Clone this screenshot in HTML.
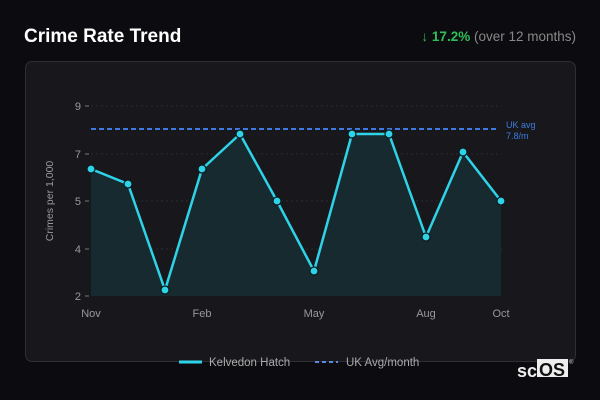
<!DOCTYPE html>
<html><head><style>
body{margin:0;width:600px;height:400px;background:#0c0c10;font-family:"Liberation Sans",sans-serif;overflow:hidden;position:relative}
.t{position:absolute;left:24px;top:26px;color:#fff;font-weight:bold;font-size:19px}
.r{position:absolute;right:24px;top:29px;font-size:13.5px;color:#888}
.r b{color:#2fbf5a}
.card{position:absolute;left:25px;top:61px;width:549px;height:299px;background:#18181c;border:1px solid #2e2e33;border-radius:7px}
</style></head><body>
<div class="t">Crime Rate Trend</div>
<div class="r"><b>↓ 17.2%</b> (over 12 months)</div>
<div class="card"></div>
<svg width="600" height="400" style="position:absolute;left:0;top:0" font-family="Liberation Sans, sans-serif">
<g stroke="#2a2a30" stroke-dasharray="2,3">
<line x1="91" y1="106" x2="502" y2="106"/><line x1="91" y1="154" x2="502" y2="154"/><line x1="91" y1="201" x2="502" y2="201"/><line x1="91" y1="249" x2="502" y2="249"/>
</g>
<polygon fill="#172a30" points="91,296 91,169 128,184 165,290 202,169 240,134 277,201 314,271 352,134 389,134 426,237 463,152 501,201 501,296"/>
<g fill="#999" font-size="11" text-anchor="end">
<text x="81" y="110">9</text><text x="81" y="158">7</text><text x="81" y="205">5</text><text x="81" y="253">4</text><text x="81" y="300">2</text>
</g>
<g stroke="#777"><line x1="85" y1="106" x2="89" y2="106"/><line x1="85" y1="154" x2="89" y2="154"/><line x1="85" y1="201" x2="89" y2="201"/><line x1="85" y1="249" x2="89" y2="249"/><line x1="85" y1="296" x2="89" y2="296"/></g>
<text transform="translate(53,201) rotate(-90)" fill="#999" font-size="10.5" text-anchor="middle">Crimes per 1,000</text>
<g fill="#999" font-size="11" text-anchor="middle">
<text x="91" y="317">Nov</text><text x="202" y="317">Feb</text><text x="314" y="317">May</text><text x="426" y="317">Aug</text><text x="501" y="317">Oct</text>
</g>
<line x1="91" y1="129" x2="498" y2="129" stroke="#3d7be0" stroke-width="2" stroke-dasharray="5,3"/>
<text x="506" y="128" fill="#3d7be0" font-size="9">UK avg</text>
<text x="506" y="139" fill="#3d7be0" font-size="9">7.8/m</text>
<polyline fill="none" stroke="#2ed3e8" stroke-width="2.5" stroke-linejoin="round" points="91,169 128,184 165,290 202,169 240,134 277,201 314,271 352,134 389,134 426,237 463,152 501,201"/>
<g fill="#2ed3e8" stroke="#0c1a1f" stroke-width="1.2">
<circle cx="91" cy="169" r="4"/><circle cx="128" cy="184" r="4"/><circle cx="165" cy="290" r="4"/><circle cx="202" cy="169" r="4"/><circle cx="240" cy="134" r="4"/><circle cx="277" cy="201" r="4"/><circle cx="314" cy="271" r="4"/><circle cx="352" cy="134" r="4"/><circle cx="389" cy="134" r="4"/><circle cx="426" cy="237" r="4"/><circle cx="463" cy="152" r="4"/><circle cx="501" cy="201" r="4"/>
</g>
<line x1="179" y1="362" x2="202" y2="362" stroke="#2ed3e8" stroke-width="3"/>
<text x="209" y="366" fill="#aaa" font-size="11.5">Kelvedon Hatch</text>
<line x1="315" y1="362" x2="338" y2="362" stroke="#5a8ae0" stroke-width="2" stroke-dasharray="4,3"/>
<text x="346" y="366" fill="#aaa" font-size="11.5">UK Avg/month</text>
<text x="517" y="377" fill="#eee" font-size="18" font-weight="bold">sc</text>
<rect x="537" y="359" width="31" height="18" fill="#eee"/>
<text x="539" y="376" fill="#111" font-size="18" font-weight="bold">OS</text>
<text x="569" y="364" fill="#ccc" font-size="6">®</text>
</svg>
</body></html>
